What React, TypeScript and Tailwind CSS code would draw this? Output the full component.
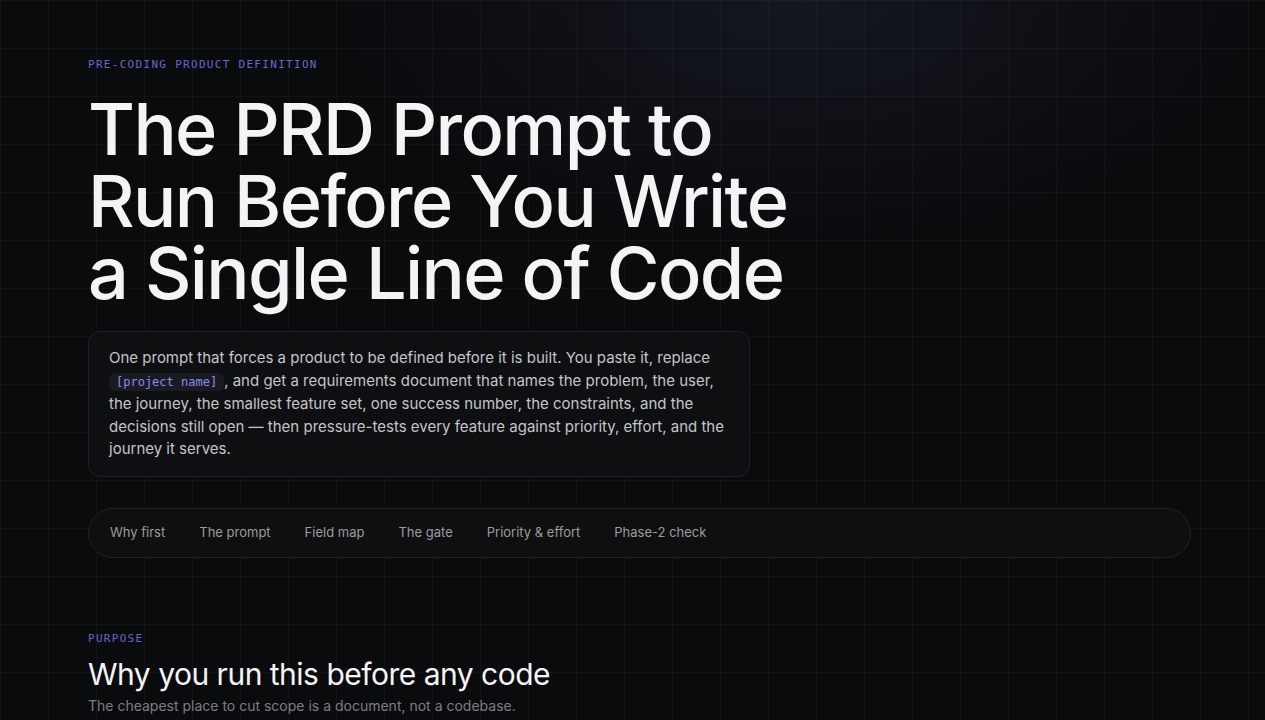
import React from 'react';

const navItems = ['Why first', 'The prompt', 'Field map', 'The gate', 'Priority & effort', 'Phase-2 check'];

function Eyebrow({ children }: { children: React.ReactNode }) {
  return (
    <p className="font-['DejaVu_Sans_Mono',monospace] text-[11px] leading-4 tracking-[1.3px] text-[#6668d2] uppercase">
      {children}
    </p>
  );
}

export default function App() {
  return (
    <div className="relative min-h-screen overflow-hidden bg-[#0a0b0d] font-['Inter',sans-serif] bg-[linear-gradient(rgba(255,255,255,0.03)_1px,transparent_1px),linear-gradient(90deg,rgba(255,255,255,0.03)_1px,transparent_1px)] bg-[size:48px_48px]">
      {/* top glow */}
      <div className="pointer-events-none absolute left-[300px] top-[-260px] h-[520px] w-[1000px] rounded-full bg-[radial-gradient(ellipse_at_center,rgba(60,70,110,0.2),transparent_65%)]" />

      <div className="relative pl-[88px] pr-[74px] pt-[57px]">
        <Eyebrow>Pre-coding product definition</Eyebrow>

        <h1 className="mt-5 text-[72px] font-medium leading-[72px] tracking-[-1.6px] text-[#f4f4f5]">
          The PRD Prompt to
          <br />
          Run Before You Write
          <br />
          a Single Line of Code
        </h1>

        <div className="mt-[22px] w-[662px] rounded-xl border border-[#1f2025] bg-[#0e0f12]/90 px-5 py-[15px]">
          <p className="text-[15px] leading-[22.5px] text-[#c4c5cb]">
            One prompt that forces a product to be defined before it is built. You paste it, replace{' '}
            <code className="rounded-md bg-[#1a1b22] px-[7px] py-[2px] font-['DejaVu_Sans_Mono',monospace] text-[12px] text-[#8a8ce6]">
              [project name]
            </code>
            , and get a requirements document that names the problem, the user, the journey, the smallest feature set, one success number, the constraints, and the decisions still open — then pressure-tests every feature against priority, effort, and the journey it serves.
          </p>
        </div>

        <nav className="mt-[31px] flex h-[50px] items-center gap-[34px] rounded-full border border-[#222326] bg-[#0f0f10] px-[21px]">
          {navItems.map((item) => (
            <a key={item} className="text-[13px] text-[#9b9ba1]">
              {item}
            </a>
          ))}
        </nav>

        <section className="mt-[73px]">
          <Eyebrow>Purpose</Eyebrow>
          <h2 className="mt-[7px] text-[30px] font-normal leading-10 tracking-[-0.5px] text-[#f4f4f5]">
            Why you run this before any code
          </h2>
          <p className="mt-px text-[14px] leading-[22px] text-[#7d7e85]">
            The cheapest place to cut scope is a document, not a codebase.
          </p>
        </section>
      </div>
    </div>
  );
}
